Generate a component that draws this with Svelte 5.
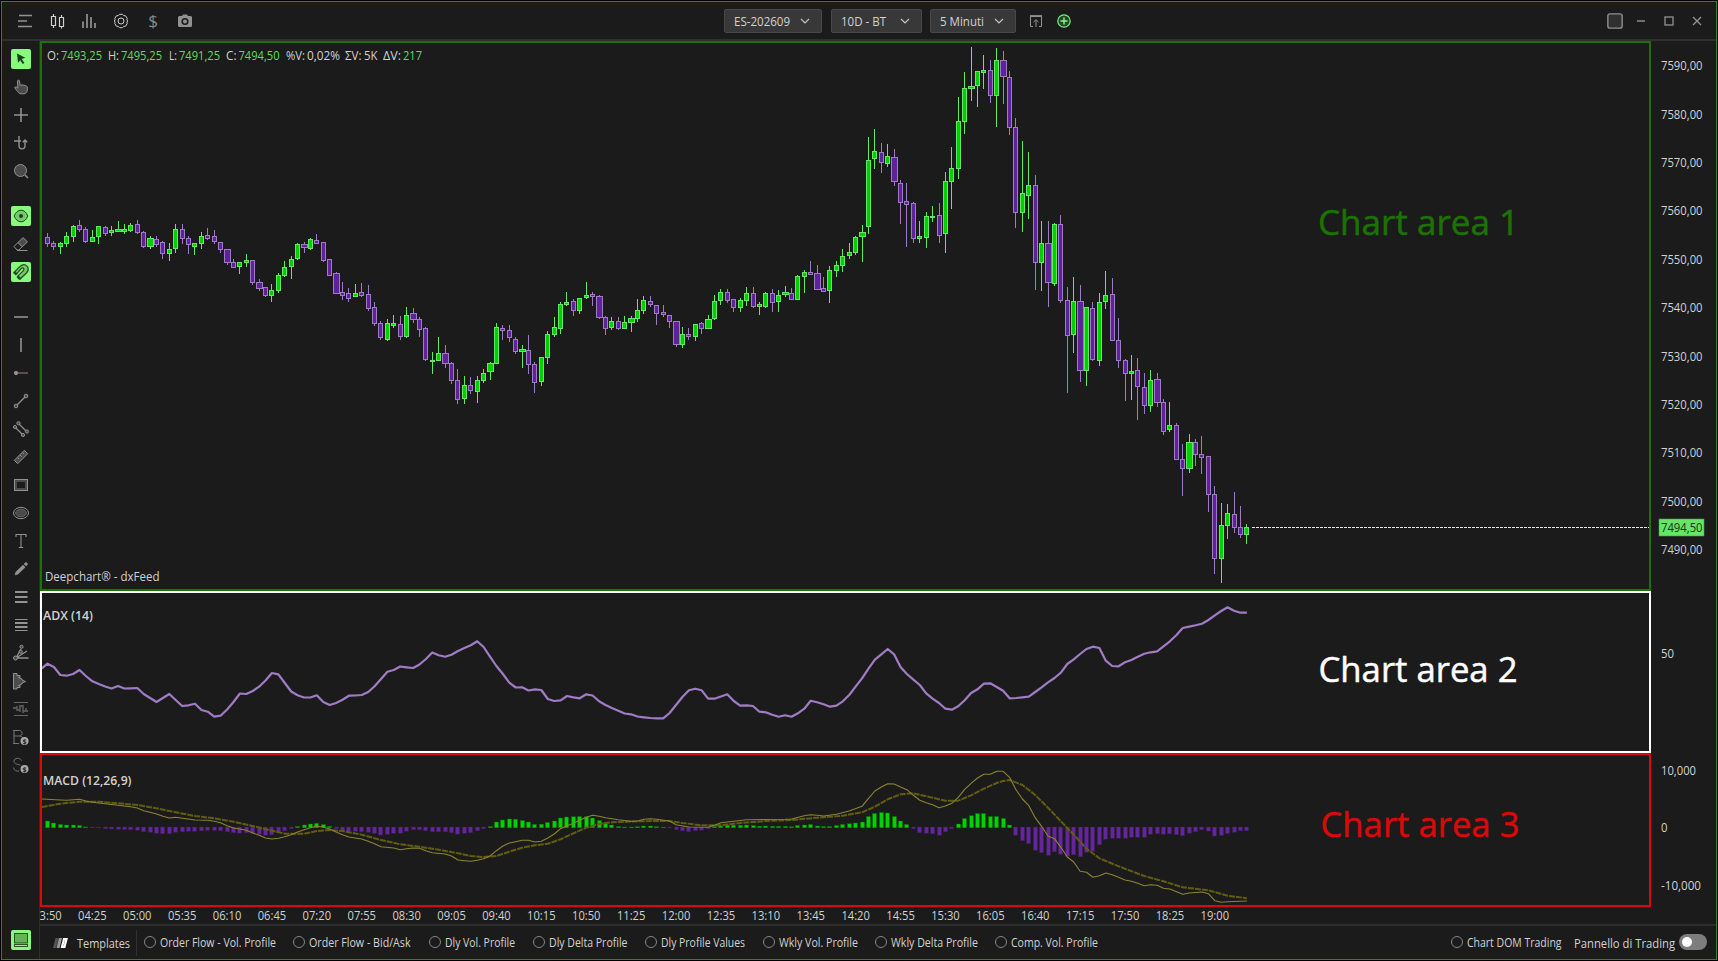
<script lang="ts">
  // u = up, d = down, capital letter = 7px body; then high, body top, body bottom, low
  const candleData = `
d 233 237 244 247,d 241 243 247 250,u 242 243 247 254,u 232 236 244 247,u 225 226 237 242,d 220 225 230 232,d 227 229 242 243,u 230 237 242 242,
u 226 226 237 244,d 226 227 234 236,u 226 230 233 236,U 221 229 232 232,u 224 229 232 234,u 223 225 231 232,d 220 224 233 234,d 231 232 247 248,
U 236 238 247 249,d 236 239 245 247,d 241 242 254 259,u 243 249 254 261,u 224 229 249 253,d 224 229 239 244,d 236 238 245 254,u 243 243 247 255,
u 232 236 244 249,d 228 235 239 240,d 230 236 242 244,d 242 242 250 253,D 249 249 263 265,d 259 262 268 268,u 262 262 267 274,u 254 260 263 267,
d 260 260 283 285,D 279 282 289 291,d 287 287 296 297,u 284 290 296 302,u 273 275 291 293,u 261 267 276 277,u 256 259 267 279,u 243 244 259 260,
D 242 244 248 253,u 238 239 249 250,d 234 240 244 244,d 242 242 261 262,d 259 259 276 276,D 272 273 294 294,d 282 292 296 300,d 288 293 299 302,
u 284 293 297 297,d 283 292 296 297,d 285 294 309 311,d 302 307 324 326,d 321 323 338 340,u 319 323 340 341,u 315 323 326 328,d 316 324 337 340,
u 307 315 337 338,D 308 313 320 323,d 317 319 330 337,d 327 328 360 361,u 352 360 362 374,u 337 353 361 361,D 345 353 364 368,d 362 363 381 384,
d 369 380 400 404,u 376 385 399 404,d 377 385 391 394,u 376 380 392 403,u 369 373 381 383,U 362 363 372 380,u 323 327 364 364,d 325 328 331 340,
d 325 330 338 342,d 337 339 352 354,U 345 349 352 368,d 335 350 365 374,d 362 364 383 393,u 357 357 382 386,u 331 334 358 364,u 317 327 335 337,
u 302 304 329 334,u 292 302 305 306,d 299 301 311 316,u 298 298 311 314,u 282 295 298 299,d 292 294 297 306,D 295 296 318 319,d 316 317 329 335,
u 317 321 328 330,d 317 321 329 330,u 316 322 329 329,U 316 318 323 332,u 299 310 319 322,u 296 300 311 314,d 296 301 305 307,d 305 305 314 325,
d 305 312 315 317,d 315 315 322 328,D 321 321 345 347,u 327 334 345 348,d 328 334 337 340,u 324 324 337 341,d 322 323 329 334,U 315 319 329 329,
u 295 301 319 320,u 289 292 301 305,d 289 292 301 303,d 299 299 308 312,u 298 300 308 312,u 287 293 301 306,d 287 293 307 308,u 302 304 307 315,
u 292 293 307 308,d 289 293 303 312,u 290 295 302 312,U 286 292 295 297,d 288 293 300 300,u 275 276 300 300,u 270 272 277 293,d 261 272 275 275,
D 265 273 290 290,d 277 288 292 292,u 266 270 291 303,u 261 265 271 277,u 249 256 266 272,u 243 252 256 259,u 236 237 253 255,U 225 232 237 262,
u 137 160 227 234,u 129 151 159 169,d 143 152 163 173,u 144 156 164 167,D 149 157 182 186,d 180 183 203 224,d 183 201 205 247,d 202 203 239 243,
u 221 236 239 243,u 212 216 238 248,u 206 216 218 222,d 203 215 236 243,u 172 181 234 253,u 147 168 182 209,u 97 121 169 179,u 72 88 122 134,
U 47 86 89 101,u 71 71 86 107,u 55 70 73 89,d 60 70 96 103,u 48 60 96 127,D 51 60 77 104,d 71 77 128 135,d 118 127 213 228,
u 141 193 213 232,u 152 185 196 219,d 175 185 263 290,u 221 243 263 291,D 221 243 283 307,u 223 224 284 286,d 215 224 301 303,d 287 300 336 393,
u 277 301 335 353,D 285 301 371 382,u 307 307 371 386,d 302 308 360 361,u 293 302 361 366,u 271 295 302 309,d 278 294 341 341,d 318 340 361 368,
d 359 360 374 401,u 355 371 374 400,d 358 370 387 420,d 373 387 406 414,u 370 380 406 412,D 373 379 403 407,d 399 402 432 435,u 402 425 430 432,
d 423 425 460 460,d 444 459 469 496,U 434 442 469 473,d 439 442 455 466,d 436 454 458 474,d 456 456 495 512,d 486 494 559 574,u 503 525 559 583,
u 504 513 526 539,d 492 514 528 533,d 506 527 535 538,u 524 527 535 544`;

  const barX = (i: number) => 47.46 + i * 6.414;

  const candles = candleData.trim().split(',').map((row, i) => {
    const [kind, high, top, bottom, low] = row.trim().split(' ');
    return {
      x: Math.floor(barX(i)),
      up: kind.toLowerCase() === 'u',
      half: kind === kind.toUpperCase() ? 3 : 2,
      high: +high,
      top: +top,
      bottom: +bottom,
      low: +low
    };
  });

  const adx = [
    663.7, 667, 675, 675.7, 674, 670, 676, 681.3, 684, 686.5, 688.5, 686, 688.5, 688.3, 688, 694, 698, 702, 698, 694,
    700, 706, 705.3, 703.7, 710, 711.7, 716.7, 715.7, 709.5, 702, 693.5, 694, 691, 686.7, 680.5, 673, 674.3, 683, 691.5, 695.3,
    697.5, 697.5, 695.3, 702, 705, 703, 699.7, 695.7, 695.5, 695, 692, 686.3, 679, 671.7, 670, 666.5, 667.3, 668, 664.5, 659,
    652.5, 655.3, 656.7, 654.7, 651, 648, 645.3, 641.3, 647, 656.7, 666, 674, 682.7, 687.5, 687.3, 690.5, 689.3, 690, 699, 701,
    700.3, 696, 697.3, 698.3, 694.3, 695.5, 701.3, 705, 708, 710.7, 713.5, 714.3, 716.5, 717.3, 718, 718.3, 718.3, 713, 705, 697,
    690.3, 688.7, 690.3, 698.7, 698.7, 696.5, 694.3, 701, 705.7, 705.3, 706, 711.7, 712.3, 714.7, 716.7, 715.3, 716.7, 713.3, 708.7, 700.7,
    702.3, 704.3, 706.7, 705.7, 701.3, 695, 686.7, 678.3, 668.7, 659.7, 654.3, 649, 654.3, 667, 674, 679.7, 685, 693.3, 698.7, 703,
    708.7, 709.7, 706.3, 700.3, 693, 689.3, 683.7, 683.3, 687, 690.7, 698.3, 698, 697.3, 696.7, 692, 687.3, 682.3, 678, 672.7, 664,
    659.3, 654, 649, 646.7, 648, 660.7, 666, 666.3, 662.3, 660, 656.7, 653.7, 652.3, 651.3, 646.3, 641.3, 635.3, 628, 626.7, 625.3,
    623.7, 620, 615.3, 611, 607.3, 610.7, 612.7, 612.7
  ];

  const hist = [
    6.5, 4.5, 3, 2.5, 2.5, 2, 0.6, -0.5, -0.6, -1.5, -1.7, -2, -2.3, -2.5, -3, -4.5, -5, -6, -6.5, -6.5,
    -5, -4.5, -4, -4, -3.5, -3, -3, -3.5, -4.5, -5.5, -6, -5.5, -6, -7, -8, -7.5, -5.5, -3.5, -1.5, 1,
    2.5, 3.5, 4.2, 3, 1.2, -1.5, -3, -4, -4, -4.5, -5, -6, -7.8, -7, -6, -6, -4, -2.5, -2.5, -3.5,
    -4.5, -4.5, -4.5, -5.5, -6.8, -6, -5.5, -3.5, -1.5, 1, 5.5, 7.5, 8.5, 8.3, 7, 5.5, 3, 3.3, 5, 6.5,
    9.5, 10.5, 10.7, 11, 10.7, 9.5, 7, 4, 2.5, 1, 0.5, 0.5, 0.8, 1.5, 1.5, 0.8, 0.4, -0.6, -2.3, -3.5,
    -4.3, -3.5, -2.8, -1.5, 1, 1.5, 2.3, 2.3, 2.3, 2.5, 2, 1.3, 1.5, 1.2, 1.2, 1.2, 0.7, 2, 2.5, 3,
    1.5, 1, 1, 2, 3, 3.8, 4.5, 5.5, 11, 14, 15, 14.5, 11, 6.5, 3, -1.5, -5.5, -6, -6.5, -8,
    -4.5, -1.5, 3.5, 9, 11.8, 14, 14, 11, 11, 9, 2.5, -8, -13.5, -16.5, -23, -25.5, -28, -24.5, -27, -29,
    -27.5, -29.5, -25, -24, -17.5, -12, -11, -11, -11, -10, -10, -10, -7, -6.5, -7, -6.5, -7.5, -8.5, -6, -4.5,
    -2.5, -3.8, -8.8, -8.3, -6.3, -5, -3.5, -3.5
  ];

  // bar index : y
  const macd = `-0.9:799 2:800 3:800.3 5:799.3 6:801 7:802.3 9:803.7 11:805.3 13:806.7 14:808 15:810.7 16:812.3 17:814 18:816.3 19:818 20:817.3
23:820 25:820.3 26:821.3 27:822.7 28:825.7 29:828 30:829 31:830.3 32:833 33:835.3 34:838 35:839 36:838.3 37:836.7 38:834.7 39:832 40:829.7
41:827.7 42:826.3 43:827 44:829 45:832 46:834.7 47:837 48:838 49:839 50:841.3 51:843.7 52:846.7 54:848 55:849.7 56:848.7 57:848 58:848.3
59:850.7 60:852.7 62:854 63:856 64:860 65:860.7 66:861.3 67:860.3 68:858.7 69:856 70:850.7 71:846 72:843 73:841.7 74:840.3 75:840.3 76:842
77:841.3 78:838 79:834 80:828.7 81:825.7 82:823.3 83:820.3 84:817.3 85:815.3 86:816.3 87:817.7 88:818.7 89:819.7 91:821.3 92:821 93:819.3
94:818.7 95:819.3 97:821 98:824.7 100:827 103:827.3 104:825.3 105:822.7 107:821.3 109:819.7 115:819.3 116:819 118:815.7 119:814.7 120:815.3
121:816 123:814.3 125:811 127:806.3 128:798.3 129:791 130:787 131:783.7 132:784 133:787 134:789.7 135:795.3 136:800.3 137:802.7 138:804.7
139:807.7 140:806 141:803.3 142:797.3 143:789.3 144:783.3 145:778 146:774.3 147:774.3 148:771.3 149:771.3 150:777.3 151:789.7 152:799
153:805.7 154:817.7 155:826.3 156:836 157:838.7 158:847.3 159:857 160:862 161:871.3 162:872.3 163:877.3 164:875.7 165:873 166:874.7
167:877.3 168:880 169:881.3 170:883.3 171:885.7 172:884.7 173:885.3 174:888.3 175:889 177:894.3 178:893 180:892 181:893.7 182:900.7
183:902.3 184:901.7 187:901`;

  const signal = `-0.9:807 0:806 2:803.7 5:801.7 8:801.7 11:803.3 14:805 17:808.3 20:812.3 23:816 26:818.3 29:821.7 32:826 35:830.7 37:833.7
40:833.7 42:831 44:830 46:831 49:834.7 52:840 55:844.3 58:846.7 61:849.7 64:853.3 66:856 68:857 70:856 72:851.7 74:847.7 76:845.3 78:843.7
80:839.3 82:833.3 84:827.7 86:824 88:822.3 90:821.7 94:821 97:821 99:823 102:825.3 105:825.3 108:823 112:821 116:820 120:817.7 124:815.7
127:812.3 129:806.7 131:799.3 133:794.3 135:793.3 138:797.7 140:800.7 142:800.7 144:795.3 146:788.7 148:783 149:781 150:780 152:785
154:795 156:807.7 158:821.3 160:834.7 162:848.7 164:858.3 167:866.3 171:876 174:881.3 177:887.3 181:890.3 184:895.7 187:898.3`;

  const toPoints = (s: string) =>
    s.split(/\s+/).map((p) => {
      const [i, y] = p.split(':');
      return `${barX(+i).toFixed(1)},${y}`;
    }).join(' ');

  const adxPoints = '42,668.3 ' + adx.map((y, i) => `${barX(i).toFixed(1)},${y}`).join(' ');

  const ohlc = [
    { t: 'O:', x: 47, w: 12 }, { t: '7493,25', x: 61, w: 41, up: true },
    { t: 'H:', x: 108, w: 11 }, { t: '7495,25', x: 121, w: 41, up: true },
    { t: 'L:', x: 169, w: 8 }, { t: '7491,25', x: 179, w: 41, up: true },
    { t: 'C:', x: 226, w: 10.5 }, { t: '7494,50', x: 238.5, w: 41, up: true },
    { t: '%V:', x: 286, w: 19 }, { t: '0,02%', x: 307, w: 33 },
    { t: 'ΣV:', x: 345, w: 16.5 }, { t: '5K', x: 364, w: 13.5 },
    { t: 'ΔV:', x: 383, w: 18 }, { t: '217', x: 403, w: 19, up: true }
  ];

  const prices = Array.from({ length: 11 }, (_, i) => 7590 - i * 10);

  const times = [
    '03:50', '04:25', '05:00', '05:35', '06:10', '06:45', '07:20', '07:55', '08:30', '09:05', '09:40', '10:15', '10:50', '11:25',
    '12:00', '12:35', '13:10', '13:45', '14:20', '14:55', '15:30', '16:05', '16:40', '17:15', '17:50', '18:25', '19:00'
  ];

  const selects = [
    { label: 'ES-202609', width: 98, text: 56 },
    { label: '10D - BT', width: 91, text: 45 },
    { label: '5 Minuti', width: 86, text: 44 }
  ];

  const templates = [
    { label: 'Order Flow - Vol. Profile', width: 149, text: 116 },
    { label: 'Order Flow - Bid/Ask', width: 135.5, text: 101.5 },
    { label: 'Dly Vol. Profile', width: 104, text: 70 },
    { label: 'Dly Delta Profile', width: 112.5, text: 78.5 },
    { label: 'Dly Profile Values', width: 117.5, text: 84 },
    { label: 'Wkly Vol. Profile', width: 112.5, text: 79 },
    { label: 'Wkly Delta Profile', width: 120, text: 87 },
    { label: 'Comp. Vol. Profile', width: 104, text: 87 }
  ];

  const toolGroups = [
    ['cursor', 'hand', 'cross', 'snap', 'search'],
    ['eye', 'eraser', 'magnet'],
    ['hline', 'vline', 'ray', 'trend', 'channel', 'ruler', 'rect', 'ellipse', 'text', 'pencil', 'lines3', 'lines4', 'fork', 'profile', 'vwap', 'buy', 'sell']
  ];
  const active = ['cursor', 'eye', 'magnet'];
</script>

{#snippet label(text, width, size)}
  <svg class="label" width={width + 4} height="22">
    <text x="2" y="15.5" font-size={size} textLength={width} lengthAdjust="spacingAndGlyphs">{text}</text>
  </svg>
{/snippet}

{#snippet tool(name)}
  <svg class="ico" width="20" height="20" viewBox="0 0 20 20">
    {#if name === 'cursor'}
      <path class="ink" d="M6 4.5l8.3 4.3-3.6 1.3 2.7 3.9-1.6 1.1-2.6-3.9-2.2 2.5z" />
    {:else if name === 'hand'}
      <path class="dim" d="M3.5 10.5c1-.9 2-.7 3.3.6L6.5 4c.3-1.2 1.7-1.2 2 0l.6 4.2c2.3-.6 5.7 0 7.2 1.6v3.4c0 1.8-1.6 3.6-3.4 3.6H10c-1.6 0-2.5-1-3.4-2.3z" />
    {:else if name === 'cross'}
      <path d="M10 3v14M3 10h14" stroke-width="1.6" />
    {:else if name === 'snap'}
      <path d="M3 8h7M8 3v9.500c0 4.500 6 4.500 6 0V8M11.800 9.300L14 7l2.200 2.300" stroke-width="1.400" />
    {:else if name === 'search'}
      <circle class="dim" cx="9.5" cy="9.5" r="6" /><path d="M14 14l3 3" stroke-width="1.5" />
    {:else if name === 'eye'}
      <path class="leaf" d="M3.200 10c2.800-7.800 10.800-7.800 13.600 0-2.800 7.800-10.800 7.800-13.600 0z" /><circle class="ink" cx="10" cy="10" r="2" />
    {:else if name === 'eraser'}
      <path d="M3 12.5l4-4 4.2 4.2-3.3 3.3H6z" /><path class="dim" d="M7 8.5L12 3.6l4.5 4.2-5.2 5z" /><path d="M6 16.5h10.5" />
    {:else if name === 'magnet'}
      <path class="leaf" d="M3 10.500l6-6.100c5.500-4.400 10.800 1.500 6.400 6.600l-6.300 6-2.600-2.600 6.100-6c1.200-1.600-.8-3.300-2.200-2l-4.900 5.600z" stroke-width="1.300" /><path d="M3.300 10.200l2.500 2.400M6.600 14.400l2.500 2.600" stroke-width="2.600" />
    {:else if name === 'hline'}
      <path d="M3 10h14" stroke-width="1.6" />
    {:else if name === 'vline'}
      <path d="M10 3v14" stroke-width="1.6" />
    {:else if name === 'ray'}
      <path d="M5 10h12" stroke="#6f6576" stroke-width="1.400" /><circle class="solid" cx="5" cy="10" r="1.7" />
    {:else if name === 'trend'}
      <path d="M6 14l8-8" stroke-width="1.3" /><circle class="dim" cx="5" cy="15" r="1.8" /><circle class="dim" cx="15" cy="5" r="1.8" />
    {:else if name === 'channel'}
      <path d="M8 5l7 7M5 9l6 6" stroke-width="1.2" /><circle class="dim" cx="7.5" cy="4.2" r="1.6" /><circle class="dim" cx="16" cy="12.5" r="1.6" /><circle class="dim" cx="4" cy="8" r="1.6" /><circle class="dim" cx="12" cy="16" r="1.6" />
    {:else if name === 'ruler'}
      <path class="dim" d="M3.3 13.3L13.3 3.3l3.4 3.4-10 10z" /><path d="M6.5 10.5l1.6 1.6M9 8l1.6 1.6M11.5 5.5l1.6 1.6" />
    {:else if name === 'rect'}
      <rect class="dim" x="3.5" y="4.5" width="13" height="11" /><rect x="6" y="7" width="8" height="6" fill="#1b1b1b" stroke="none" />
    {:else if name === 'ellipse'}
      <ellipse cx="10" cy="10" rx="7.5" ry="5.7" /><ellipse cx="10" cy="10" rx="5.4" ry="3.8" fill="#4a4a4a" stroke="#666" />
    {:else if name === 'text'}
      <path d="M5 6V3.5h10V6M10 3.5v13M7.8 16.5h4.4" stroke-width="1.1" />
    {:else if name === 'pencil'}
      <path class="solid" d="M4 16l.8-3L12 6l2.2 2.2-7.3 7zM13 5l1.5-1.3c1-.5 2.4.8 2 1.9L15 7z" stroke-width=".5" />
    {:else if name === 'lines3'}
      <path d="M4 5h12.5M4 10h12.5M4 15h12.5" stroke-width="1.8" />
    {:else if name === 'lines4'}
      <path d="M4 4.5h12.5M4 15.5h12.5" /><path d="M4 8h12.5M4 12h12.5" stroke-width="1.9" />
    {:else if name === 'fork'}
      <path d="M5 15l5-9M5 15l11-7M5.5 15h12" stroke-width="1.3" /><circle class="dim" cx="10.5" cy="3.8" r="1.6" /><circle class="dim" cx="9.7" cy="8.7" r="1.6" /><circle class="dim" cx="4.5" cy="15" r="2" />
    {:else if name === 'profile'}
      <path class="dim" d="M2.500 2.500h3.500v2h3v2h-1.500l3.500 1.500v1l3.500 1.500-3.500 1.500v1l-3.500 1.500H9v2H6v1.500H2.500z" />
    {:else if name === 'vwap'}
      <path d="M3 3.5h14M3 16.5h14" stroke="#666" /><path d="M2 9h4v2h3V7h3v5h5M6 7v4M9 8v5M12 9v5M15 9v4" stroke="#555" stroke-width="1.8" />
    {:else if name === 'buy'}
      <path d="M3 3.5v13M2 3.5h6.5c3.5 0 3.5 5.5 0 5.500H3M8.500 9c2 0 3 1 3 2M2 16.500h6" stroke="#777" /><circle cx="13.500" cy="14" r="4" fill="#aaa" stroke="none" /><text class="coin" x="11.500" y="16.700">$</text>
    {:else if name === 'sell'}
      <path d="M10.500 5.500C9 2.300 3 2.500 3 6.200s5 2.600 6.500 4.300M2.500 12.500c.5 3 3 4 5.500 3.500" stroke="#777" /><circle cx="13.500" cy="14" r="4" fill="#aaa" stroke="none" /><text class="coin" x="11.500" y="16.700">$</text>
    {/if}
  </svg>
{/snippet}

<div class="window">
  <header>
    <div class="left">
      <svg class="ico" viewBox="0 0 20 20"><path d="M4 4.500h13M3 10h9M3 15.500h14" stroke-width="1.400" /></svg>
      <svg class="ico bright" viewBox="0 0 20 20"><path d="M4.500 5.500h4v9h-4zM12.500 6.500h4v9h-4zM6.500 3v2.500M6.500 14.500V17M14.500 4v2.500M14.500 15.500v2" stroke-width="1.200" /></svg>
      <svg class="ico" viewBox="0 0 20 20"><path d="M4 10.500V17M8 3v14M12 6v11M16 12v5" stroke-width="1.700" /></svg>
      <svg class="ico bright" viewBox="0 0 20 20"><path d="M7.300 4.600l1.200-1.300h3l1.200 1.300 1.900.2 1.600 2.600-.3 1.500.8 1.100-.8 1.100.3 1.500-1.600 2.600-1.900.2-1.200 1.300h-3l-1.200-1.300-1.900-.2-1.600-2.600.3-1.500-.8-1.100.8-1.100-.3-1.500 1.600-2.600z" /><circle cx="10" cy="10" r="3" /></svg>
      <span class="dollar">$</span>
      <svg class="ico" viewBox="0 0 20 20"><path d="M3 6.500q0-1.500 1.500-1.500H7l1-1.500h4L13 5h2.500Q17 5 17 6.500v8q0 1.500-1.500 1.500h-11Q3 16 3 14.500z" fill="#929292" stroke="none" /><circle cx="10" cy="10.500" r="2.800" fill="#929292" stroke="#1b1b1b" stroke-width="1.600" /></svg>
    </div>
    <div class="center">
      {#each selects as s}
        <button class="select" style="width: {s.width}px">
          {@render label(s.label, s.text, 12)}
          <svg width="10" height="6" viewBox="0 0 10 6"><path d="M1 1l4 4 4-4" fill="none" stroke="#c4c4c4" stroke-width="1.2" /></svg>
        </button>
      {/each}
      <svg class="ico popup" viewBox="0 0 20 20"><path d="M7 15.500H4.500v-10h11v10H13M10 16V9M7.500 11L10 8.700l2.500 2.300" /><path d="M4 5h12" stroke-width="1.800" /></svg>
      <svg class="ico add" viewBox="0 0 20 20"><circle cx="10" cy="10" r="6.200" fill="#26462a" stroke="#76ef76" stroke-width="1.200" /><path d="M10 6.500v7M6.500 10h7" stroke="#8af98a" stroke-width="1.400" /></svg>
    </div>
    <div class="controls">
      <svg class="ico pin" viewBox="0 0 20 20"><rect x="3.500" y="3.500" width="13" height="13" rx="2" fill="#303030" stroke="#8e8e8e" stroke-width="1.300" /></svg>
      <svg class="ico" viewBox="0 0 20 20"><path d="M6 10h8" stroke-width="1.400" /></svg>
      <svg class="ico" viewBox="0 0 20 20"><rect x="6" y="6" width="8" height="8" stroke-width="1.300" /></svg>
      <svg class="ico" viewBox="0 0 20 20"><path d="M6 6l8 8M14 6l-8 8" stroke-width="1.300" /></svg>
    </div>
  </header>

  <div class="body">
    <aside>
      {#each toolGroups as group}
        <div class="group">
          {#each group as name}
            <div class="tool">
              <div class="box" class:active={active.includes(name)}>{@render tool(name)}</div>
            </div>
          {/each}
        </div>
      {/each}
      <div class="box active dock">
        <svg width="20" height="20" viewBox="0 0 20 20"><rect x="3.500" y="3.500" width="13" height="9.500" fill="#66b257" stroke="#2b5425" /><rect x="3.500" y="14.500" width="13" height="2" fill="#88fa7c" stroke="#2b5425" /></svg>
      </div>
    </aside>

    <main>
      <div class="charts">
        <div class="plots">
          <section class="panel price">
            <svg viewBox="42 43 1607 546">
              {#each candles as c}
                <g class={c.up ? 'up' : 'down'}>
                  <rect class="wick" x={c.x} y={c.high} width="1" height={c.low - c.high} />
                  <rect class="candle" x={c.x - c.half + 0.5} y={c.top + 0.5} width={c.half * 2} height={c.bottom - c.top - 1} />
                </g>
              {/each}
              <path d="M1252 527.500H1649" stroke="#e8e8e8" stroke-dasharray="3 1" />
              {#each ohlc as o}
                <text class:green={o.up} x={o.x} y="60" textLength={o.w} lengthAdjust="spacingAndGlyphs">{o.t}</text>
              {/each}
              <text x="45" y="581" textLength="114.500" lengthAdjust="spacingAndGlyphs">Deepchart® - dxFeed</text>
              <text class="area" x="1318" y="235" textLength="201" lengthAdjust="spacingAndGlyphs">Chart area 1</text>
            </svg>
          </section>
          <section class="panel adx">
            <svg viewBox="42 593 1607 158">
              <polyline points={adxPoints} stroke="#a17cc6" stroke-width="2.200" />
              <text class="title" x="43" y="620" textLength="50" lengthAdjust="spacingAndGlyphs">ADX (14)</text>
              <text class="area" x="1318.500" y="682" textLength="199" lengthAdjust="spacingAndGlyphs">Chart area 2</text>
            </svg>
          </section>
          <section class="panel macd">
            <svg viewBox="42 755 1607 150">
              {#each hist as h, i}
                <rect x={Math.floor(barX(i)) - 1.5} y={h > 0 ? 827.5 - h : 827} width="4" height={Math.abs(h) + 0.3} fill={h > 0 ? '#00d400' : '#64259f'} stroke={h > 0 ? '#0c6a0c' : '#3a2052'} stroke-width="0.4" />
              {/each}
              <polyline points={toPoints(signal)} stroke="#625d12" stroke-width="2" stroke-dasharray="6 1" />
              <polyline points={toPoints(macd)} stroke="#8c8532" stroke-width="1.100" />
              <text class="title" x="43" y="785" textLength="88.500" lengthAdjust="spacingAndGlyphs">MACD (12,26,9)</text>
              <text class="area" x="1320.500" y="837" textLength="199" lengthAdjust="spacingAndGlyphs">Chart area 3</text>
            </svg>
          </section>
          <svg class="times" viewBox="40 907 1611 17">
            {#each times as t, i}
              <text x={33.2 + i * 44.9} y="920" textLength="28.500" lengthAdjust="spacingAndGlyphs">{t}</text>
            {/each}
          </svg>
        </div>
        <svg class="axis" viewBox="1651 41 65 883">
          {#each prices as p}
            <text x="1661" y={70.1 + (7590 - p) * 4.84} textLength="41.500" lengthAdjust="spacingAndGlyphs">{p},00</text>
          {/each}
          <rect x="1659" y="519" width="45" height="17" fill="#66e566" stroke="#4c9a4c" stroke-width=".6" />
          <text class="last" x="1661" y="531.800" textLength="41.500" lengthAdjust="spacingAndGlyphs">7494,50</text>
          <text x="1661" y="658" textLength="13" lengthAdjust="spacingAndGlyphs">50</text>
          <text x="1661" y="775" textLength="35" lengthAdjust="spacingAndGlyphs">10,000</text>
          <text x="1661" y="832" textLength="6.500" lengthAdjust="spacingAndGlyphs">0</text>
          <text x="1661" y="890" textLength="40" lengthAdjust="spacingAndGlyphs">-10,000</text>
        </svg>
      </div>

      <footer>
        <svg width="18" height="12" viewBox="0 0 18 12"><path d="M3.500 1h3L4 11H1z" fill="#555" /><path d="M7 1h3L7.500 11h-3z" fill="#9a9a9a" /><path d="M12 2h2.500l-2 8H10z" fill="none" stroke="#fff" stroke-width="2.200" /></svg>
        <div class="templates">{@render label('Templates', 53, 12.5)}</div>
        {#each templates as t}
          <label class="radio" style="width: {t.width}px"><i></i>{@render label(t.label, t.text, 11.5)}</label>
        {/each}
        <label class="radio dom"><i></i>{@render label('Chart DOM Trading', 94.5, 11.5)}</label>
        <div class="panello">{@render label('Pannello di Trading', 101, 12.5)}</div>
        <div class="toggle"><span></span></div>
      </footer>
    </main>
  </div>
</div>

<style>
  :global(body) {
    margin: 0;
    background: #000;
  }

  .window {
    box-sizing: border-box;
    width: 1716px;
    height: 959px;
    margin: 1px;
    border: 1px solid #3d7a3a;
    background: #1b1b1b;
    color: #d2d2d2;
    font-family: 'Open Sans', 'Noto Sans', sans-serif;
    font-size: 12px;
    display: flex;
    flex-direction: column;
    overflow: hidden;
  }

  svg {
    display: block;
    flex: none;
  }

  text {
    fill: #d2d2d2;
    font-size: 12px;
  }

  .label {
    margin: 0 -2px;
    overflow: visible;
  }

  .label text {
    font-size: inherit;
  }

  .ico {
    width: 20px;
    height: 20px;
    fill: none;
    stroke: #929292;
  }

  .bright {
    stroke: #d0d0d0;
  }

  header {
    height: 37px;
    flex: none;
    border-bottom: 2px solid #303030;
    display: grid;
    grid-template-columns: 722px auto 1fr;
    align-items: center;
  }

  .left {
    display: flex;
    align-items: center;
    gap: 12px;
    padding-left: 13px;
  }

  .dollar {
    width: 20px;
    text-align: center;
    font-size: 17px;
    line-height: 20px;
    color: #8a8a8a;
  }

  .center {
    display: flex;
    align-items: center;
    gap: 8.5px;
  }

  .select {
    box-sizing: border-box;
    height: 24px;
    padding: 0 11px 0 9px;
    border: 1px solid #484848;
    border-radius: 2px;
    background: #383838;
    font: inherit;
    display: flex;
    align-items: center;
    justify-content: space-between;
  }

  .popup {
    margin-left: 1px;
  }

  .controls {
    display: flex;
    justify-content: flex-end;
    gap: 8px;
    padding-right: 9px;
  }

  .pin {
    width: 22px;
    height: 22px;
    margin: -1px -3px -1px 0;
  }

  .body {
    flex: 1;
    display: flex;
    min-height: 0;
  }

  aside {
    width: 37px;
    flex: none;
    border-right: 1px solid #2e2e2e;
    padding-top: 4px;
    display: flex;
    flex-direction: column;
    align-items: center;
  }

  .group {
    margin-bottom: 17px;
  }

  .tool {
    height: 28px;
    display: flex;
    align-items: center;
  }

  .box {
    width: 20px;
    height: 20px;
    border-radius: 2px;
  }

  .active {
    background: #88fa7c;
  }

  .active .ico {
    stroke: #244d23;
  }

  .dock {
    margin-top: auto;
    margin-bottom: 9px;
  }

  .ink {
    fill: #1f3d1f;
    stroke: none;
  }

  .leaf {
    fill: #75cb6a;
  }

  .dim {
    fill: #4c4c4c;
  }

  .solid {
    fill: #929292;
  }

  .coin {
    fill: #222;
    stroke: none;
    font-size: 7px;
    font-weight: 700;
  }

  main {
    flex: 1;
    display: flex;
    flex-direction: column;
  }

  .charts {
    display: flex;
    height: 883px;
  }

  .plots {
    width: 1611px;
    display: flex;
    flex-direction: column;
  }

  .panel {
    border: 2px solid;
  }

  .panel svg {
    width: 1607px;
    height: 100%;
  }

  .price {
    height: 546px;
    border-color: #1c7304;
  }

  .adx {
    height: 158px;
    border-color: #fff;
  }

  .macd {
    height: 150px;
    border-color: #d80a0a;
  }

  .times {
    width: 1611px;
    height: 17px;
  }

  .axis {
    width: 65px;
    height: 883px;
  }

  polyline {
    fill: none;
    stroke-linejoin: round;
  }

  .up .wick {
    fill: #62e862;
  }

  .down .wick {
    fill: #a07ac6;
  }

  .up .candle {
    fill: #00cf00;
    stroke: #62e862;
  }

  .down .candle {
    fill: #5f2399;
    stroke: #a07ac6;
  }

  text.green {
    fill: #5fdc5f;
  }

  text.title {
    font-weight: 600;
  }

  text.area {
    font-size: 35px;
    stroke-width: 0.5px;
  }

  .price .area {
    fill: #1c7304;
    stroke: #1c7304;
  }

  .adx .area {
    fill: #fff;
    stroke: #fff;
  }

  .macd .area {
    fill: #d80a0a;
    stroke: #d80a0a;
  }

  text.last {
    fill: #143014;
  }

  footer {
    height: 33px;
    border-top: 2px solid #2e2e2e;
    padding: 0 9px 0 12px;
    display: flex;
    align-items: center;
  }

  .templates {
    margin-left: 7px;
    padding: 2px 6px 2px 0;
    border-right: 1px solid #303030;
    margin-right: 7px;
  }

  .radio {
    flex: none;
    display: flex;
    align-items: center;
    gap: 4px;
    margin-top: -2px;
  }

  .radio i {
    box-sizing: border-box;
    width: 12px;
    height: 12px;
    flex: none;
    border: 1px solid #858585;
    border-radius: 50%;
  }

  .dom {
    margin-left: auto;
  }

  .panello {
    margin: 0 4px 0 13px;
  }

  .toggle {
    width: 28px;
    height: 16px;
    margin-top: -1px;
    border-radius: 8px;
    background: #7d7d7d;
    display: flex;
    align-items: center;
  }

  .toggle span {
    width: 10px;
    height: 10px;
    margin-left: 3px;
    border-radius: 50%;
    background: #fff;
  }
</style>
